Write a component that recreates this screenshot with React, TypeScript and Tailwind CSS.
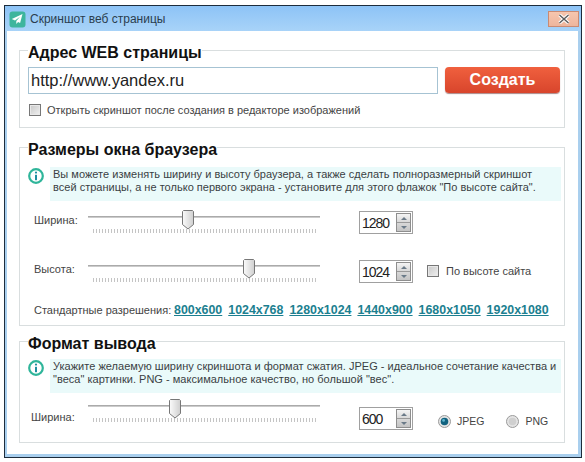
import React from "react";

function Info({ lines }: { lines: string[] }) {
  return (
    <div className="flex items-start h-[34px]">
      <svg width="18" height="18" viewBox="0 0 18 18" className="ml-[6px] shrink-0">
        <circle cx="9" cy="9" r="6.8" fill="#fff" stroke="#2fb59a" strokeWidth="2.2" />
        <circle cx="9" cy="5.6" r="1.1" fill="#1f8fa0" />
        <rect x="8" y="7.8" width="2" height="5.4" fill="#1f8fa0" />
      </svg>
      <div className="ml-[5px] flex-1 h-[34px] bg-[#eafafa] pl-[3px] pt-[1px] text-[11px] leading-[13px] tracking-[0.02px] text-[#3a3f44] whitespace-nowrap">
        {lines.map((l) => (
          <div key={l}>{l}</div>
        ))}
      </div>
    </div>
  );
}

function Slider({ pos }: { pos: number }) {
  return (
    <div className="relative w-[232px] h-[25px] shrink-0">
      <div className="absolute left-0 right-0 top-[6px] h-[2px] bg-[linear-gradient(#9a9a9a,#dcdcdc)]" />
      <div className="absolute left-[5px] right-[4px] top-[19px] h-[4px] bg-[repeating-linear-gradient(90deg,#c4c4c4_0_1px,transparent_1px_3px)]" />
      <svg width="12" height="20" viewBox="0 0 12 20" className="absolute top-0" style={{ left: pos }}>
        <defs>
          <linearGradient id="th" x1="0" x2="1" y1="0" y2="0">
            <stop offset="0" stopColor="#fbfbfb" />
            <stop offset="1" stopColor="#cfcfcf" />
          </linearGradient>
        </defs>
        <path d="M1.5 .5h9l1 1v13l-5.5 4.5-5.5-4.5v-13z" fill="url(#th)" stroke="#777" />
      </svg>
    </div>
  );
}

function Spin({ value }: { value: string }) {
  return (
    <div className="w-[54px] h-[23px] border border-[#a0a0a0] bg-white flex items-center justify-between pl-[2px] pr-[1px] shrink-0">
      <span className="text-[14px] leading-none tracking-[-1px] text-[#222]">{value}</span>
      <div className="flex flex-col w-[15px] h-[19px] border border-[#8e8e8e] bg-[#e8e8e8]">
        <div className="flex-1 flex items-center justify-center border-b border-[#9a9a9a] bg-[linear-gradient(#f4f4f4,#d8d8d8)]">
          <div className="w-0 h-0 border-x-[3px] border-x-transparent border-b-[3px] border-b-[#6a7a88]" />
        </div>
        <div className="flex-1 flex items-center justify-center bg-[linear-gradient(#d8d8d8,#c4c4c4)]">
          <div className="w-0 h-0 border-x-[3px] border-x-transparent border-t-[3px] border-t-[#6a7a88]" />
        </div>
      </div>
    </div>
  );
}

function Check() {
  return (
    <div className="w-[12px] h-[12px] border border-[#777] bg-[linear-gradient(135deg,#c8c8c8,#f0f0f0)] shadow-[inset_0_0_0_1px_#e8e8e8] shrink-0" />
  );
}

function Radio({ on }: { on?: boolean }) {
  return (
    <svg width="13" height="13" viewBox="0 0 13 13" className="shrink-0">
      <circle cx="6.5" cy="6.5" r="6" fill="#e4e4e4" stroke="#9a9a9a" />
      <circle cx="6.5" cy="6.5" r="3.8" fill={on ? "#11627f" : "#cfcfcf"} />
      {on && <circle cx="5.6" cy="5.4" r="1.4" fill="#5fb4cf" />}
    </svg>
  );
}

function Group({ title, className, children }: { title: string; className: string; children: React.ReactNode }) {
  return (
    <fieldset className={`min-w-0 border border-[#d9dedf] ml-[12px] mr-[13px] pl-[1px] pr-[3px] ${className}`}>
      <legend className="ml-[7px] pt-[4px] text-[16px] leading-[17px] font-bold text-[#111]">{title}</legend>
      {children}
    </fieldset>
  );
}

const links = ["800x600", "1024x768", "1280x1024", "1440x900", "1680x1050", "1920x1080"];

export default function App() {
  return (
    <div className="w-[585px] h-[462px] bg-white pl-[4px] pt-[5px] font-['Liberation_Sans',sans-serif] overflow-hidden">
      <div className="w-[578px] h-[453px] border border-[#1d2c3c] bg-[#a9cfee] flex flex-col">
        <div className="h-[25px] flex items-center bg-[linear-gradient(#8dc3f6,#a8d3f8)] shrink-0">
          <svg width="17" height="17" viewBox="0 0 17 17" className="ml-[4px] mt-[1px]">
            <rect width="16" height="16" x=".5" y=".5" rx="3" fill="#3eb59d" />
            <path d="M13.5 3 2.8 8l3.2 1.4L11 5.8 7.3 10v3l1.8-2 2 1z" fill="#fff" />
          </svg>
          <span className="ml-[4px] text-[12px] text-[#2a3d4e]">Скриншот веб страницы</span>
          <div className="ml-auto mr-[2px] w-[31px] h-[16px] border border-[#c98a72] bg-[linear-gradient(#f6c6ae,#eeb59c)] flex items-center justify-center">
            <svg width="12" height="10" viewBox="0 0 12 10">
              <path d="M1.5 1 10.5 9M10.5 1 1.5 9" stroke="#fff" strokeWidth="3.4" />
              <path d="M1.5 1 10.5 9M10.5 1 1.5 9" stroke="#5b5b5b" strokeWidth="1.4" />
            </svg>
          </div>
        </div>
        <div className="ml-[2px] mr-[3px] mb-[3px] flex-1 min-h-0 bg-white pt-[9px]">
          <Group title="Адрес WEB страницы" className="h-[88px] mb-[9px]">
            <div className="flex gap-[7px] pl-[7px] mt-[6px]">
              <div className="w-[410px] h-[27px] border border-[#a6c3d3] flex items-center pl-[2px] text-[16.5px] text-[#222]">
                http://www.yandex.ru
              </div>
              <button className="w-[115px] h-[26px] rounded-[4px] bg-[linear-gradient(#f0603e,#d8452c)] text-white font-bold text-[16px] shadow-[0_1px_1px_#a88]">
                Создать
              </button>
            </div>
            <div className="flex items-center gap-[6px] pl-[8px] mt-[8px]">
              <Check />
              <span className="text-[11px] text-[#444]">Открыть скриншот после создания в редакторе изображений</span>
            </div>
          </Group>
          <Group title="Размеры окна браузера" className="h-[189px] mb-[5px]">
            <div className="mt-[9px]">
              <Info
                lines={[
                  "Вы можете изменять ширину и высоту браузера, а также сделать полноразмерный скриншот",
                  "всей страницы, а не только первого экрана - установите для этого флажок \"По высоте сайта\".",
                ]}
              />
            </div>
            <div className="flex items-start mt-[9px] pl-[13px]">
              <span className="w-[54px] text-[11px] text-[#444] mt-[2px]">Ширина:</span>
              <Slider pos={94} />
              <div className="ml-[39px] mt-[1px]"><Spin value="1280" /></div>
            </div>
            <div className="flex items-start mt-[24px] pl-[13px]">
              <span className="w-[54px] text-[11px] text-[#444] mt-[2px]">Высота:</span>
              <Slider pos={155} />
              <div className="ml-[39px] mt-[1px]"><Spin value="1024" /></div>
              <div className="ml-[14px] mt-[4px] flex items-center gap-[7px]">
                <Check />
                <span className="text-[11px] text-[#444]">По высоте сайта</span>
              </div>
            </div>
            <div className="flex items-center mt-[17px] pl-[13px] text-[11px] text-[#444] whitespace-nowrap">
              <span className="w-[140px]">Стандартные разрешения:</span>
              <div className="flex gap-[6px]">
                {links.map((l) => (
                  <span key={l} className="font-bold text-[12.4px] underline text-[#1c7f90]">{l}</span>
                ))}
              </div>
            </div>
          </Group>
          <Group title="Формат вывода" className="h-[112px]">
            <div className="mt-[7px]">
              <Info
                lines={[
                  "Укажите желаемую ширину скриншота и формат сжатия. JPEG - идеальное сочетание качества и",
                  "\"веса\" картинки. PNG - максимальное качество, но большой \"вес\".",
                ]}
              />
            </div>
            <div className="flex items-start mt-[6px] pl-[10px]">
              <span className="w-[57px] text-[11px] text-[#444] mt-[10px]">Ширина:</span>
              <Slider pos={81} />
              <div className="ml-[39px] mt-[8px]"><Spin value="600" /></div>
              <div className="ml-[25px] mt-[15px] flex items-center">
                <Radio on />
                <span className="ml-[6px] text-[10.5px] text-[#444]">JPEG</span>
                <div className="ml-[22px]"><Radio /></div>
                <span className="ml-[6px] text-[10.5px] text-[#444]">PNG</span>
              </div>
            </div>
          </Group>
        </div>
      </div>
    </div>
  );
}
